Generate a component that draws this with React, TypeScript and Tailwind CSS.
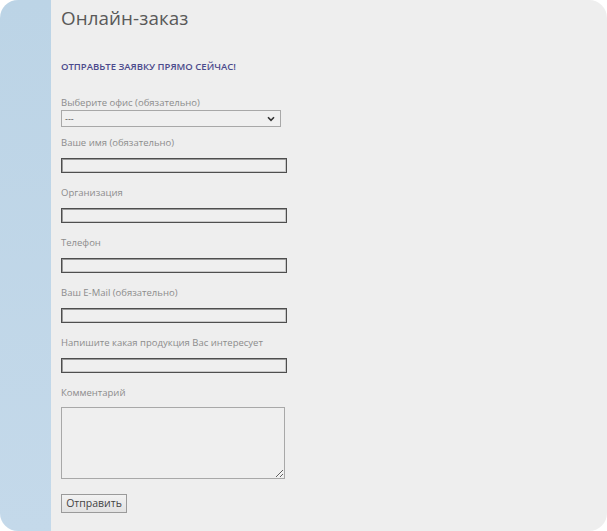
import React from "react";

const font = { fontFamily: '"Open Sans", "Noto Sans", "Liberation Sans", sans-serif' };

function Label({ children, className = "" }: { children: React.ReactNode; className?: string }) {
  return (
    <div className={"h-[14px] text-[9.5px] leading-[14px] text-[#8c8c8c] " + className}>{children}</div>
  );
}

function TextInput({ className = "" }: { className?: string }) {
  return (
    <input
      type="text"
      className={
        "block h-[15px] w-[226px] border border-[#4e4e4e] bg-[#efefef] shadow-[inset_1px_1px_0_#9a9a9a,inset_-1px_-1px_0_#c8c8c8] outline-none " +
        className
      }
    />
  );
}

function Field({ label, top }: { label: string; top: string }) {
  return (
    <div className={top}>
      <Label>{label}</Label>
      <TextInput className="mt-[8px]" />
    </div>
  );
}

export default function App() {
  return (
    <div className="h-[531px] w-[607px] bg-white" style={font}>
      <div className="flex h-full w-full overflow-hidden rounded-[18px]">
        <div className="w-[51px] shrink-0 bg-gradient-to-b from-[#bcd4e6] to-[#c4d9ea]" />
        <div className="flex-1 bg-[#eeeeee] pl-[10px]">
          <h1 className="pt-[6px] text-[18.8px] leading-[24px] tracking-[0.1px] text-[#595959]">Онлайн-заказ</h1>

          <div className="mt-[31px] text-[9.5px] font-semibold leading-[12px] text-[#4b4a8c]">
            ОТПРАВЬТЕ ЗАЯВКУ ПРЯМО СЕЙЧАС!
          </div>

          <Label className="mt-[23px]">Выберите офис (обязательно)</Label>
          <div className="flex h-[17px] w-[220px] items-center justify-between border border-[#a8a8a8] bg-[#f0f0f0] pl-[3px] pr-[5px]">
            <span className="text-[9px] leading-none text-[#555]">---</span>
            <svg width="8" height="6" viewBox="0 0 8 6">
              <path d="M1 1.2 L4 4.3 L7 1.2" fill="none" stroke="#333" strokeWidth="1.6" />
            </svg>
          </div>

          <Field label="Ваше имя (обязательно)" top="mt-[9px]" />
          <Field label="Организация" top="mt-[13px]" />
          <Field label="Телефон" top="mt-[13px]" />
          <Field label="Ваш E-Mail (обязательно)" top="mt-[13px]" />
          <Field label="Напишите какая продукция Вас интересует" top="mt-[13px]" />

          <div className="mt-[13px]">
            <Label>Комментарий</Label>
            <textarea className="mt-[7px] block h-[72px] w-[224px] border border-[#a8a8a8] bg-[#efefef] outline-none" />
          </div>

          <button className="mt-[15px] block h-[19px] w-[66px] border border-[#9a9a9a] bg-gradient-to-b from-[#f2f2f2] to-[#e2e2e2] text-[10.5px] leading-none text-[#444]">
            Отправить
          </button>
        </div>
      </div>
    </div>
  );
}
